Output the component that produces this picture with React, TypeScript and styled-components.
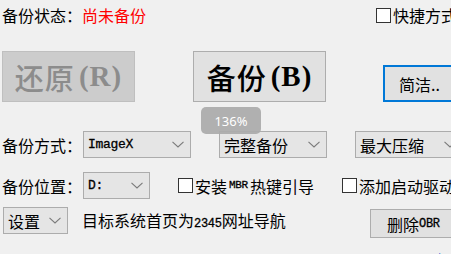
import React from "react";
import styled, { createGlobalStyle } from "styled-components";

const GlobalStyle = createGlobalStyle`
  html, body {
    margin: 0;
    padding: 0;
    background: #f0f0f0;
  }
`;

const cjk = `"Noto Sans CJK SC", "Noto Sans", sans-serif`;

const Panel = styled.div`
  position: relative;
  width: 451px;
  height: 254px;
  overflow: hidden;
  background: #f0f0f0;
  font-family: ${cjk};
  font-size: 16px;
  color: #000;
  display: flex;
  flex-direction: column;
`;

const Row = styled.div<{ $top: number; $height: number; $left?: number }>`
  display: flex;
  align-items: center;
  flex-shrink: 0;
  margin-top: ${(p) => p.$top}px;
  height: ${(p) => p.$height}px;
  padding-left: ${(p) => p.$left ?? 2}px;
  white-space: nowrap;
`;

const Label = styled.span<{ $width?: number; $color?: string; $ml?: number }>`
  display: inline-block;
  flex-shrink: 0;
  width: ${(p) => (p.$width ? `${p.$width}px` : "auto")};
  margin-left: ${(p) => p.$ml ?? 0}px;
  color: ${(p) => p.$color ?? "#000"};
  line-height: 1;
`;

const Status = styled.div`
  display: flex;
  width: 374px;
  flex-shrink: 0;
`;

const CheckLabel = styled.label<{ $ml?: number; $width?: number }>`
  display: flex;
  align-items: center;
  flex-shrink: 0;
  width: ${(p) => (p.$width ? `${p.$width}px` : "auto")};
  margin-left: ${(p) => p.$ml ?? 0}px;
  gap: 2px;
  line-height: 1;
`;

const Box = styled.span`
  display: inline-block;
  width: 13px;
  height: 13px;
  border: 1px solid #333;
  background: #fff;
  flex-shrink: 0;
`;

const BigButton = styled.div<{ $disabled?: boolean; $ml?: number }>`
  box-sizing: border-box;
  width: 133px;
  height: 51px;
  flex-shrink: 0;
  margin-left: ${(p) => p.$ml ?? 0}px;
  display: flex;
  align-items: center;
  justify-content: center;
  background: ${(p) => (p.$disabled ? "#cccccc" : "#e1e1e1")};
  border: 1px solid ${(p) => (p.$disabled ? "#bfbfbf" : "#adadad")};
  color: ${(p) => (p.$disabled ? "#8c8c8c" : "#000")};
  font-size: 29px;
  font-weight: 500;
  font-family: ${cjk};
  letter-spacing: 1px;
`;

const Paren = styled.span`
  font-family: "Liberation Serif", serif;
  font-weight: 700;
  font-size: 29px;
  margin-left: 4px;
`;

const Button = styled.div<{ $width: number; $height: number; $ml?: number; $focus?: boolean; $mt?: number }>`
  box-sizing: border-box;
  width: ${(p) => p.$width}px;
  height: ${(p) => p.$height}px;
  flex-shrink: 0;
  margin-left: ${(p) => p.$ml ?? 0}px;
  margin-top: ${(p) => p.$mt ?? 0}px;
  align-self: ${(p) => (p.$mt !== undefined ? "flex-start" : "flex-end")};
  display: flex;
  align-items: center;
  padding-left: ${(p) => (p.$focus ? 14 : 16)}px;
  background: #e1e1e1;
  border: ${(p) => (p.$focus ? "2px solid #0078d7" : "1px solid #adadad")};
  font-size: 16px;
  line-height: 1;
`;

const Mono = styled.span<{ $size?: number }>`
  font-family: "Liberation Mono", monospace;
  font-weight: 400;
  font-size: ${(p) => p.$size ?? 13}px;
  letter-spacing: -0.3px;
  -webkit-text-stroke: 0.3px #000;
`;

const Select = styled.div<{ $width: number; $ml?: number }>`
  box-sizing: border-box;
  width: ${(p) => p.$width}px;
  height: 27px;
  flex-shrink: 0;
  margin-left: ${(p) => p.$ml ?? 0}px;
  display: flex;
  align-items: center;
  justify-content: space-between;
  padding: 0 6px 0 4px;
  background: #e5e5e5;
  border: 1px solid #acacac;
  line-height: 1;
`;

const Chevron = () => (
  <svg width="12" height="7" viewBox="0 0 12 7">
    <path d="M0.5 0.8 L6 6 L11.5 0.8" fill="none" stroke="#7a7a7a" strokeWidth="1.1" />
  </svg>
);

const Zoom = styled.div`
  position: absolute;
  left: 201px;
  top: 107px;
  width: 60px;
  height: 27px;
  border-radius: 5px;
  background: rgba(170, 170, 170, 0.92);
  color: #fff;
  font-family: "Noto Sans", sans-serif;
  font-size: 13px;
  display: flex;
  align-items: center;
  justify-content: center;
`;

const Link = styled.div`
  position: absolute;
  left: 424px;
  top: 249px;
  color: #1a5fd6;
  font-size: 12px;
  letter-spacing: 2px;
`;

export default function App() {
  return (
    <>
      <GlobalStyle />
      <Panel>
        <Row $top={3} $height={24}>
          <Status>
            <Label>备份状态：</Label>
            <Label $color="#ff0000">尚未备份</Label>
          </Status>
          <CheckLabel>
            <Box />
            快捷方式
          </CheckLabel>
        </Row>

        <Row $top={24} $height={51}>
          <BigButton $disabled>
            还原<Paren>(R)</Paren>
          </BigButton>
          <BigButton $ml={58}>
            备份<Paren>(B)</Paren>
          </BigButton>
          <Button $width={100} $height={37} $ml={57} $focus>
            简洁..
          </Button>
        </Row>

        <Row $top={29} $height={27}>
          <Label $width={81}>备份方式：</Label>
          <Select $width={108}>
            <Mono>ImageX</Mono>
            <Chevron />
          </Select>
          <Select $width={108} $ml={28}>
            完整备份
            <Chevron />
          </Select>
          <Select $width={108} $ml={28}>
            最大压缩
            <Chevron />
          </Select>
        </Row>

        <Row $top={14} $height={27}>
          <Label $width={81}>备份位置：</Label>
          <Select $width={67}>
            <Mono>D:</Mono>
            <Chevron />
          </Select>
          <CheckLabel $ml={28} $width={164}>
            <Box />
            安装<Mono $size={11}>MBR</Mono>热键引导
          </CheckLabel>
          <CheckLabel>
            <Box />
            添加启动驱动
          </CheckLabel>
        </Row>

        <Row $top={8} $height={31} $left={3}>
          <Select $width={65} style={{ alignSelf: "flex-start" }}>
            设置
            <Chevron />
          </Select>
          <Label $ml={14} $width={288} style={{ alignSelf: "flex-start", marginTop: 5 }}>
            目标系统首页为<Mono $size={12}>2345</Mono>网址导航
          </Label>
          <Button $width={100} $height={29} $mt={2}>
            删除<Mono $size={12}>OBR</Mono>
          </Button>
        </Row>

        <Zoom>136%</Zoom>
        <Link>·|·|·</Link>
      </Panel>
    </>
  );
}
